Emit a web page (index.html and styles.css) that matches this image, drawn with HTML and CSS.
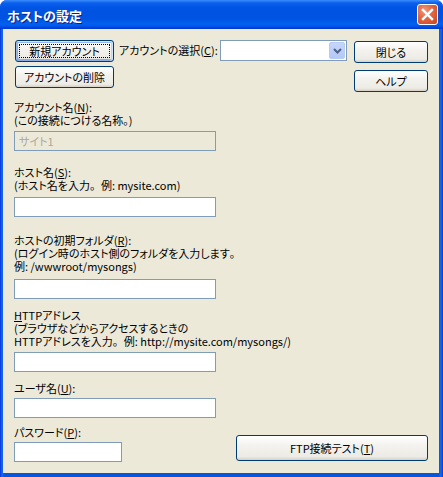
FILE: index.html
```html
<!DOCTYPE html>
<html lang="ja">
<head>
    <meta charset="UTF-8">
    <title>ホストの設定</title>
    <link rel="stylesheet" href="styles.css">
</head>
<body>

    <div class="window">
        <div class="titlebar">
            <span class="title">ホストの設定</span>
            <span class="close">
                <svg width="21" height="21" viewBox="0 0 21 21">
                    <line x1="6" y1="6" x2="15" y2="15" stroke="#fff" stroke-width="2.4" stroke-linecap="square"/>
                    <line x1="15" y1="6" x2="6" y2="15" stroke="#fff" stroke-width="2.4" stroke-linecap="square"/>
                </svg>
            </span>
        </div>

        <div class="client">
            <div class="top">
                <div class="btn-col">
                    <button class="btn default"><span class="focus">新規アカウント</span></button>
                    <button class="btn">アカウントの削除</button>
                </div>
                <span class="select-label">アカウントの選択(<u>C</u>):</span>
                <div class="combo">
                    <span class="combo-arrow">
                        <svg width="9" height="6" viewBox="0 0 9 6">
                            <polyline points="1,1 4.5,4.5 8,1" fill="none" stroke="#4d6185" stroke-width="2"/>
                        </svg>
                    </span>
                </div>
                <div class="btn-col right">
                    <button class="btn">閉じる</button>
                    <button class="btn">ヘルプ</button>
                </div>
            </div>

            <div class="field f1">
                <div class="field-label">アカウント名(<u>N</u>):<br>(この接続につける名称<span class="fw">。</span>)</div>
                <div class="text disabled i1">サイト1</div>
            </div>

            <div class="field f2">
                <div class="field-label">ホスト名(<u>S</u>):<br>(ホスト名を入力<span class="fw">。</span>例: mysite.com)</div>
                <div class="text i2"></div>
            </div>

            <div class="field f3">
                <div class="field-label">ホストの初期フォルダ(<u>R</u>):<br>(ログイン時のホスト側のフォルダを入力します<span class="fw">。</span><br>例: /wwwroot/mysongs)</div>
                <div class="text i3"></div>
            </div>

            <div class="field f4">
                <div class="field-label"><u>H</u>TTPアドレス<br>(ブラウザなどからアクセスするときの<br>HTTPアドレスを入力<span class="fw">。</span>例: http://mysite.com/mysongs/)</div>
                <div class="text i4"></div>
            </div>

            <div class="field f5">
                <div class="field-label">ユーザ名(<u>U</u>):</div>
                <div class="text i5"></div>
            </div>

            <div class="bottom">
                <div class="field f6">
                    <div class="field-label">パスワード(<u>P</u>):</div>
                    <div class="text short i6"></div>
                </div>
                <button class="btn test">FTP接続テスト(<u>T</u>)</button>
            </div>
        </div>
    </div>

</body>
</html>
```

FILE: styles.css
```css
body {
    margin: 0;
    background-color: #ffffff;
    font-family: "Noto Sans CJK JP", sans-serif;
    font-size: 11px;
    font-feature-settings: "palt";
    color: #000;
}

.window {
    width: 443px;
    height: 477px;
    display: flex;
    flex-direction: column;
    background: linear-gradient(to right, #0831d9 0, #166aee 2px, #0855dd 4px, #0855dd 439px, #166aee 441px, #0831d9 443px);
    border-radius: 7px 7px 0 0;
    overflow: hidden;
    box-sizing: border-box;
}

.titlebar {
    height: 29px;
    flex-shrink: 0;
    display: flex;
    align-items: center;
    justify-content: space-between;
    padding: 0 5px 0 7px;
    background: linear-gradient(to bottom, #3b8dfa 0, #0a5fee 3px, #0054e3 8px, #0052e0 18px, #0360f0 24px, #0058ec 26px, #003dd7 28px, #003dd7 29px);
}

.title {
    color: #fff;
    font-weight: bold;
    font-size: 13px;
    text-shadow: 1px 1px 0 #0a1e8c;
    margin-top: 1px;
}

.close {
    width: 21px;
    height: 21px;
    box-sizing: border-box;
    border: 1px solid #fff;
    border-radius: 3px;
    background: radial-gradient(circle at 35% 30%, #f09a80 0, #e36a44 40%, #c8431d 100%);
    display: flex;
}

.close svg {
    margin: -1px;
}

.client {
    flex: 1;
    margin: 0 4px 4px 3px;
    background-color: #ece9d8;
    padding: 11px 11px 0 11px;
    display: flex;
    flex-direction: column;
}

u {
    text-decoration: underline;
    text-underline-offset: 1px;
}

.fw {
    font-feature-settings: normal;
}

/* buttons */

.btn {
    position: relative;
    height: 22px;
    padding: 0;
    font-family: inherit;
    font-size: 11px;
    font-feature-settings: "palt";
    white-space: nowrap;
    color: #000;
    border: 1px solid #003c74;
    border-radius: 3px;
    background: linear-gradient(to bottom, #ffffff 0, #f3f2ee 40%, #ecebe5 86%, #d8d0c4 100%);
    box-sizing: border-box;
}

.btn.default {
    box-shadow: inset -1px 1px #cee7ff, inset 1px 2px #98b8ea, inset -2px 0 #bcd4f6, inset 1px -1px #89ade4, inset 2px -2px #89ade4;
}

.btn.default .focus::after {
    content: "";
    position: absolute;
    left: 3px;
    right: 3px;
    top: 3px;
    bottom: 3px;
    border: 1px dotted #000;
}

.top {
    display: flex;
    align-items: flex-start;
}

.btn-col {
    display: flex;
    flex-direction: column;
    gap: 4px;
    width: 99px;
    margin-left: 1px;
}

.btn-col .btn {
    width: 100%;
}

.btn-col.right {
    width: 74px;
    margin-left: 7px;
    margin-top: 1px;
    gap: 7px;
}

.select-label {
    line-height: 21px;
    margin-left: 5px;
    white-space: nowrap;
}

.combo {
    width: 127px;
    height: 21px;
    margin-left: auto;
    box-sizing: border-box;
    border: 1px solid #7f9db9;
    background-color: #fff;
    display: flex;
    justify-content: flex-end;
    padding: 1px;
}

.combo-arrow {
    width: 16px;
    height: 17px;
    border-radius: 2px;
    background: linear-gradient(to bottom, #c6d6fc, #b4c8f6);
    border: 1px solid #b8cbf4;
    box-sizing: border-box;
    display: flex;
    align-items: center;
    justify-content: center;
}

/* form fields */

.field {
    display: flex;
    flex-direction: column;
    align-items: flex-start;
}

.field-label {
    line-height: 13px;
    white-space: nowrap;
}

.text {
    width: 202px;
    height: 20px;
    box-sizing: border-box;
    border: 1px solid #7f9db9;
    background-color: #fff;
    line-height: 18px;
    padding-left: 4px;
}

.text.disabled {
    background-color: #ece9d8;
    color: #aca899;
}

.text.short {
    width: 108px;
}

.f1 { margin-top: 9px; }
.i1 { margin-top: 4px; }
.f2 { margin-top: 15px; }
.i2 { margin-top: 5px; }
.f3 { margin-top: 17px; }
.i3 { margin-top: 6px; }
.f4 { margin-top: 10px; }
.i4 { margin-top: 4px; }
.f5 { margin-top: 10px; }
.i5 { margin-top: 3px; }
.f6 { margin-top: 8px; }
.i6 { margin-top: 3px; }

.bottom {
    display: flex;
    justify-content: space-between;
    align-items: flex-end;
}

.btn.test {
    width: 192px;
    height: 26px;
    margin-bottom: 1px;
}
```
